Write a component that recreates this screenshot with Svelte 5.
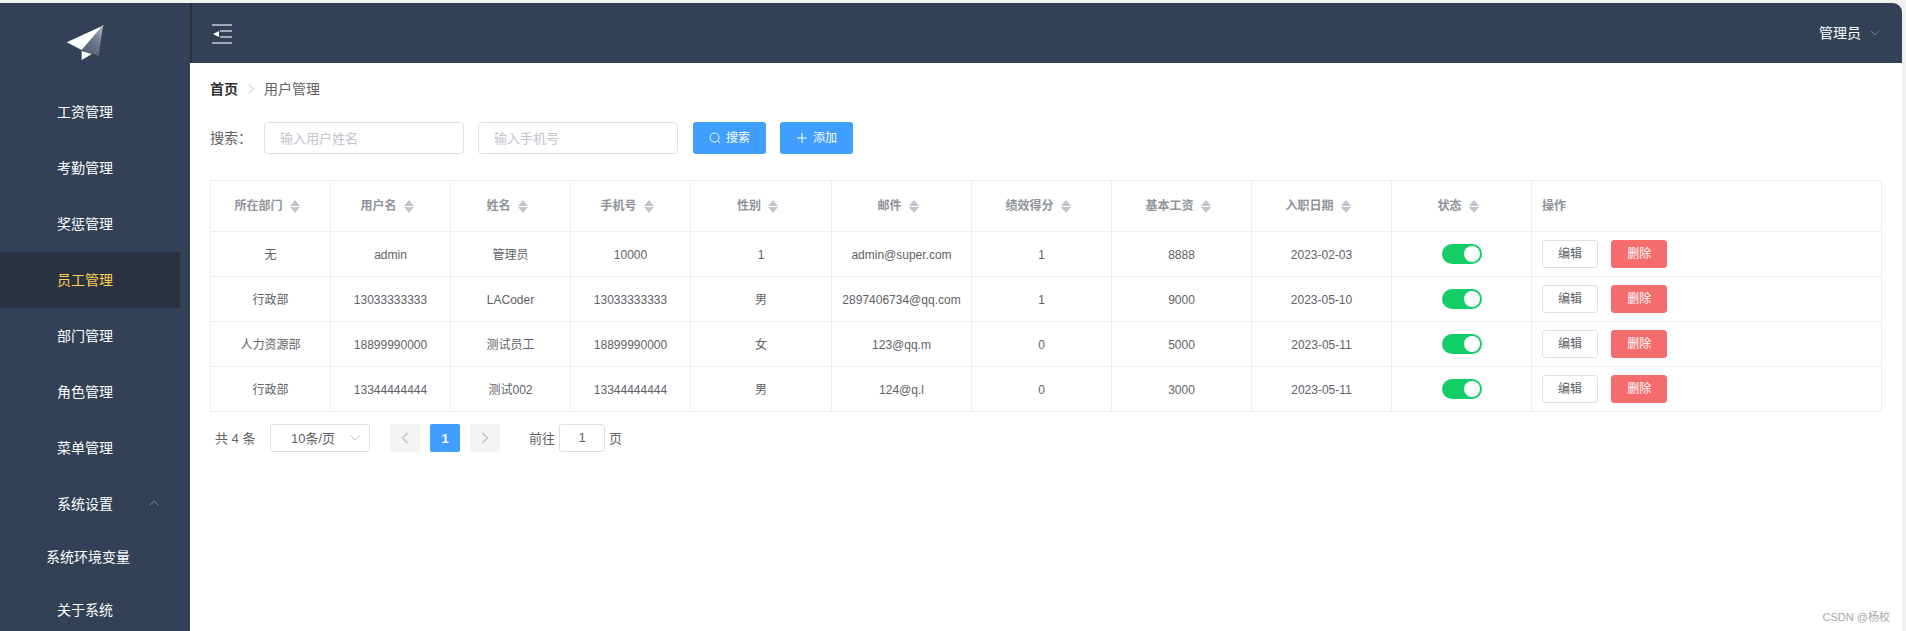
<script lang="ts">
  type Employee = {
    dept: string;
    username: string;
    name: string;
    phone: string;
    gender: string;
    email: string;
    score: number;
    salary: number;
    joined: string;
  };

  const menu = ['工资管理', '考勤管理', '奖惩管理', '员工管理', '部门管理', '角色管理', '菜单管理'];
  const active = '员工管理';

  const columns = ['所在部门', '用户名', '姓名', '手机号', '性别', '邮件', '绩效得分', '基本工资', '入职日期', '状态'];
  const widths = [120, 120, 120, 120, 141, 140, 140, 140, 140, 140, 350];

  const rows: Employee[] = [
    { dept: '无', username: 'admin', name: '管理员', phone: '10000', gender: '1', email: 'admin@super.com', score: 1, salary: 8888, joined: '2023-02-03' },
    { dept: '行政部', username: '13033333333', name: 'LACoder', phone: '13033333333', gender: '男', email: '2897406734@qq.com', score: 1, salary: 9000, joined: '2023-05-10' },
    { dept: '人力资源部', username: '18899990000', name: '测试员工', phone: '18899990000', gender: '女', email: '123@qq.m', score: 0, salary: 5000, joined: '2023-05-11' },
    { dept: '行政部', username: '13344444444', name: '测试002', phone: '13344444444', gender: '男', email: '124@q.l', score: 0, salary: 3000, joined: '2023-05-11' }
  ];

  // fold lines on the right wing of the logo
  const fan = Array.from({ length: 12 }, (_, i) => ({
    x: 81.7 + (i * 16.3) / 11,
    y: 50 + (i * 5.7) / 11
  }));
</script>

<div class="page">
  <aside class="sidebar">
    <div class="logo">
      <svg width="44" height="44" viewBox="60 20 44 44" aria-hidden="true">
        <polygon points="102.7,25.7 66.7,42.3 81.7,50" fill="#fff" />
        <polygon points="81.7,51 81.7,60 92,54" fill="#fff" />
        {#each fan as p}
          <line x1="102.7" y1="25.7" x2={p.x} y2={p.y} stroke="#aeb4c0" stroke-width="0.55" />
        {/each}
      </svg>
    </div>
    <nav class="menu">
      {#each menu as item}
        <div class="menu-item" class:active={item === active}>{item}</div>
      {/each}
      <div class="menu-item submenu">
        系统设置
        <svg class="submenu-arrow" width="12" height="8" viewBox="0 0 12 8" aria-hidden="true">
          <path d="M1.5 6.5 L6 2 L10.5 6.5" fill="none" stroke="#77808f" stroke-width="1" />
        </svg>
      </div>
      <div class="menu-sub wide">系统环境变量</div>
      <div class="menu-sub">关于系统</div>
    </nav>
  </aside>

  <div class="main">
    <header class="topbar">
      <svg class="fold" width="20" height="20" viewBox="0 0 20 20" aria-hidden="true">
        <path d="M0 1h20M8 7h12M8 13h12M0 19h20" stroke="#c9ccd3" stroke-width="1.4" fill="none" />
        <polygon points="1,10 7,7 7,13" fill="#fff" />
      </svg>
      <div class="user">
        <span>管理员</span>
        <svg width="12" height="8" viewBox="0 0 12 8" aria-hidden="true">
          <path d="M1.5 1.5 L6 6 L10.5 1.5" fill="none" stroke="#77808f" stroke-width="1" />
        </svg>
      </div>
    </header>

    <section class="content">
      <div class="breadcrumb">
        <strong>首页</strong>
        <svg width="8" height="12" viewBox="0 0 8 12" aria-hidden="true">
          <path d="M1.5 1.5 L6.5 6 L1.5 10.5" fill="none" stroke="#c0c4cc" stroke-width="1" />
        </svg>
        <span>用户管理</span>
      </div>

      <div class="toolbar">
        <span class="toolbar-label">搜索：</span>
        <input class="field" placeholder="输入用户姓名" />
        <input class="field second" placeholder="输入手机号" />
        <button class="btn-primary first" type="button">
          <svg width="12" height="12" viewBox="0 0 12 12" aria-hidden="true">
            <circle cx="5.5" cy="5.5" r="4.5" fill="none" stroke="#fff" stroke-width="1" />
            <path d="M9 9l2 2" stroke="#fff" stroke-width="1" />
          </svg>
          搜索
        </button>
        <button class="btn-primary" type="button">
          <svg width="12" height="12" viewBox="0 0 12 12" aria-hidden="true">
            <path d="M6 1v10M1 6h10" stroke="#fff" stroke-width="1" />
          </svg>
          添加
        </button>
      </div>

      <table class="grid">
        <colgroup>
          {#each widths as w}
            <col style={`width:${w}px`} />
          {/each}
        </colgroup>
        <thead>
          <tr>
            {#each columns as col}
              <th>
                <span class="th-inner">
                  {col}
                  <span class="caret"><i class="up"></i><i class="down"></i></span>
                </span>
              </th>
            {/each}
            <th class="left">操作</th>
          </tr>
        </thead>
        <tbody>
          {#each rows as row}
            <tr>
              <td>{row.dept}</td>
              <td>{row.username}</td>
              <td>{row.name}</td>
              <td>{row.phone}</td>
              <td>{row.gender}</td>
              <td>{row.email}</td>
              <td>{row.score}</td>
              <td>{row.salary}</td>
              <td>{row.joined}</td>
              <td class="status"><span class="switch"><i></i></span></td>
              <td class="left">
                <button class="btn-small" type="button">编辑</button>
                <button class="btn-small danger" type="button">删除</button>
              </td>
            </tr>
          {/each}
        </tbody>
      </table>

      <div class="pager">
        <span class="total">共 4 条</span>
        <div class="size">
          <span>10条/页</span>
          <svg width="12" height="8" viewBox="0 0 12 8" aria-hidden="true">
            <path d="M1.5 1.5 L6 6 L10.5 1.5" fill="none" stroke="#c0c4cc" stroke-width="1" />
          </svg>
        </div>
        <button class="page-btn prev" type="button" aria-label="上一页">
          <svg width="8" height="12" viewBox="0 0 8 12" aria-hidden="true">
            <path d="M6.5 1 L1.5 6 L6.5 11" fill="none" stroke="#c0c4cc" stroke-width="1.6" />
          </svg>
        </button>
        <button class="page-btn current" type="button">1</button>
        <button class="page-btn" type="button" aria-label="下一页">
          <svg width="8" height="12" viewBox="0 0 8 12" aria-hidden="true">
            <path d="M1.5 1 L6.5 6 L1.5 11" fill="none" stroke="#c0c4cc" stroke-width="1.6" />
          </svg>
        </button>
        <span class="goto">前往</span>
        <div class="jump">1</div>
        <span>页</span>
      </div>
    </section>
  </div>

  <span class="watermark">CSDN @杨校</span>
</div>

<style>
  :global(body) {
    background: #f1f1f1;
    overflow: hidden;
  }

  .page {
    width: 1902px;
    height: 628px;
    margin-top: 3px;
    display: flex;
    position: relative;
    overflow: hidden;
    border-top-right-radius: 9px;
    background: #fff;
    font-family: "Liberation Sans", "Noto Sans CJK SC", sans-serif;
  }

  .sidebar {
    width: 190px;
    flex: none;
    background: #334157;
    color: #fff;
    overflow: hidden;
  }

  .logo {
    height: 81px;
    padding: 17px 0 0 60px;
    box-sizing: border-box;
  }

  .logo svg {
    display: block;
  }

  .menu {
    width: 180px;
    font-size: 14px;
  }

  .menu-item {
    height: 56px;
    line-height: 56px;
    padding-left: 57px;
    position: relative;
  }

  .menu-item.active {
    background: #293344;
    color: #ffd04b;
  }

  .submenu-arrow {
    position: absolute;
    left: 148px;
    top: 23px;
  }

  .menu-sub {
    height: 53px;
    line-height: 51px;
    padding-left: 57px;
  }

  .menu-sub.wide {
    padding-left: 46px;
  }

  .main {
    flex: 1;
    min-width: 0;
    display: flex;
    flex-direction: column;
  }

  .topbar {
    height: 60px;
    flex: none;
    background: #334157;
    border-left: 2px solid #2c2f36;
    display: flex;
    align-items: center;
    justify-content: space-between;
    padding: 0 21px 0 20px;
    box-sizing: border-box;
  }

  .fold {
    display: block;
    margin-top: 1px;
  }

  .user {
    display: flex;
    align-items: center;
    gap: 8px;
    color: #fff;
    font-size: 14px;
    line-height: 16px;
  }

  .content {
    padding: 0 21px 0 20px;
  }

  .breadcrumb {
    height: 52px;
    display: flex;
    align-items: center;
    gap: 9px;
    font-size: 14px;
    line-height: 16px;
    color: #606266;
  }

  .breadcrumb strong {
    color: #303133;
    font-weight: 700;
  }

  .toolbar {
    height: 32px;
    margin-top: 7px;
    display: flex;
    align-items: center;
  }

  .toolbar-label {
    width: 54px;
    font-size: 14px;
    line-height: 16px;
    color: #606266;
  }

  .field {
    width: 200px;
    height: 32px;
    box-sizing: border-box;
    border: 1px solid #dcdfe6;
    border-radius: 4px;
    padding: 0 15px;
    font: inherit;
    font-size: 13px;
    line-height: 16px;
    color: #606266;
    outline: none;
  }

  .field::placeholder {
    color: #c0c4cc;
  }

  .field.second {
    margin-left: 14px;
  }

  .btn-primary {
    width: 73px;
    height: 32px;
    margin-left: 14px;
    padding: 0;
    border: none;
    border-radius: 3px;
    background: #409eff;
    color: #fff;
    font: inherit;
    font-size: 12px;
    line-height: 14px;
    display: inline-flex;
    align-items: center;
    justify-content: center;
    gap: 5px;
  }

  .btn-primary.first {
    margin-left: 15px;
  }

  .grid {
    width: 1671px;
    margin-top: 26px;
    table-layout: fixed;
    border-collapse: collapse;
    font-size: 12px;
    line-height: 14px;
    color: #606266;
  }

  .grid th,
  .grid td {
    border: 1px solid #ebeef5;
    padding: 0 4px;
    text-align: center;
    box-sizing: border-box;
    white-space: nowrap;
  }

  .grid th {
    height: 51px;
    color: #909399;
    font-weight: 700;
  }

  .grid td {
    height: 45px;
    padding-top: 2px;
  }

  .grid td.status {
    padding-top: 0;
  }

  .grid .left,
  .grid td.left {
    text-align: left;
    padding-top: 0;
    padding-left: 10px;
  }

  .th-inner {
    display: inline-flex;
    align-items: center;
    gap: 7px;
    padding-right: 6px;
  }

  .caret {
    width: 11px;
    display: inline-flex;
    flex-direction: column;
    gap: 1px;
  }

  .caret i {
    display: block;
    width: 0;
    height: 0;
    border-left: 5.5px solid transparent;
    border-right: 5.5px solid transparent;
  }

  .caret .up {
    border-bottom: 6px solid #c0c4cc;
  }

  .caret .down {
    border-top: 6px solid #c0c4cc;
  }

  .switch {
    display: inline-block;
    vertical-align: middle;
    width: 40px;
    height: 20px;
    border-radius: 10px;
    background: #13ce66;
    position: relative;
  }

  .switch i {
    position: absolute;
    top: 2px;
    right: 2px;
    width: 16px;
    height: 16px;
    border-radius: 50%;
    background: #fff;
  }

  .btn-small {
    width: 56px;
    height: 28px;
    padding: 0;
    vertical-align: middle;
    box-sizing: border-box;
    border: 1px solid #dcdfe6;
    border-radius: 3px;
    background: #fff;
    color: #606266;
    font: inherit;
    font-size: 12px;
    line-height: 14px;
  }

  .btn-small.danger {
    margin-left: 10px;
    border-color: #f56c6c;
    background: #f56c6c;
    color: #fff;
  }

  .pager {
    height: 28px;
    margin-top: 12px;
    display: flex;
    align-items: center;
    font-size: 13px;
    line-height: 15px;
    color: #606266;
  }

  .total {
    margin-left: 5px;
    width: 55px;
  }

  .size {
    width: 100px;
    height: 28px;
    box-sizing: border-box;
    border: 1px solid #dcdfe6;
    border-radius: 3px;
    display: flex;
    align-items: center;
    justify-content: space-between;
    padding: 0 8px 0 20px;
  }

  .page-btn {
    width: 30px;
    height: 28px;
    margin-left: 10px;
    padding: 0;
    border: none;
    border-radius: 2px;
    background: #f4f4f5;
    font: inherit;
    font-weight: 700;
    display: flex;
    align-items: center;
    justify-content: center;
  }

  .page-btn.prev {
    margin-left: 20px;
  }

  .page-btn.current {
    background: #409eff;
    color: #fff;
  }

  .goto {
    margin-left: 29px;
  }

  .jump {
    width: 46px;
    height: 28px;
    margin: 0 4px 0 4px;
    box-sizing: border-box;
    border: 1px solid #dcdfe6;
    border-radius: 3px;
    line-height: 26px;
    text-align: center;
  }

  .watermark {
    position: absolute;
    right: 12px;
    bottom: 7px;
    font-size: 11px;
    line-height: 13px;
    color: #a8a8a8;
  }
</style>
